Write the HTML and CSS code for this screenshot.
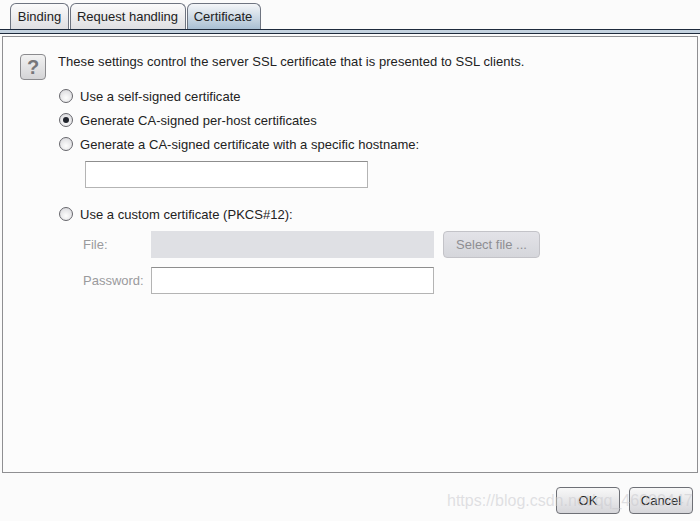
FILE: index.html
```html
<!DOCTYPE html>
<html lang="en">
<head>
    <meta charset="UTF-8">
    <title>Certificate</title>
    <link rel="stylesheet" href="styles.css">
</head>
<body>

    <div class="tabs">
        <div class="tab tab-binding">Binding</div>
        <div class="tab tab-request">Request handling</div>
        <div class="tab tab-active">Certificate</div>
    </div>
    <div class="tab-band"></div>

    <div class="panel">
        <div class="intro">
            <div class="help-icon">?</div>
            <p>These settings control the server SSL certificate that is presented to SSL clients.</p>
        </div>

        <div class="options">
            <label class="option"><span class="radio"></span>Use a self-signed certificate</label>
            <label class="option"><span class="radio radio-on"></span>Generate CA-signed per-host certificates</label>
            <label class="option"><span class="radio"></span>Generate a CA-signed certificate with a specific hostname:</label>
            <div class="text-field hostname"></div>
            <label class="option option-custom"><span class="radio"></span>Use a custom certificate (PKCS#12):</label>

            <div class="form-row row-file">
                <span class="form-label">File:</span>
                <div class="text-field field-wide field-disabled"></div>
                <div class="select-file">Select file ...</div>
            </div>
            <div class="form-row">
                <span class="form-label">Password:</span>
                <div class="text-field field-wide"></div>
            </div>
        </div>
    </div>

    <div class="footer">
        <div class="btn">OK</div>
        <div class="btn">Cancel</div>
    </div>

    <div class="watermark">https://blog.csdn.net/qq_46000447</div>

</body>
</html>
```

FILE: styles.css
```css
html, body {
    height: 100%;
}

body {
    font-family: 'Liberation Sans', Arial, sans-serif;
    font-size: 13px;
    color: #222;
    background: #fbfbfb;
    margin: 0;
    position: relative;
    overflow: hidden;
    display: flex;
    flex-direction: column;
}

.tabs {
    display: flex;
    gap: 1px;
    height: 26px;
    padding: 3px 0 0 10px;
}

.tab {
    display: flex;
    align-items: center;
    justify-content: center;
    box-sizing: border-box;
    height: 26px;
    border: 1px solid #6e7480;
    border-bottom: none;
    border-radius: 6px 6px 0 0;
    background: linear-gradient(to bottom, #fbfbfb, #dfdfe2);
}

.tab-binding {
    width: 59px;
}

.tab-request {
    width: 116px;
    padding-right: 1px;
}

.tab-active {
    width: 74px;
    padding-right: 2px;
    background: linear-gradient(to bottom, #f4f6f8, #a9bfd3);
}

.tab-band {
    height: 3px;
    background: #c4d2df;
    border-top: 1px solid #1e2a3c;
    border-bottom: 1px solid #1e2a3c;
}

.panel {
    box-sizing: border-box;
    height: 437px;
    margin: 2px 2px 0 2px;
    border: 1px solid #8f8f92;
    background: #fcfcfc;
}

.intro {
    display: flex;
    gap: 12px;
    padding: 17px 0 0 17px;
}

.intro p {
    margin: 0;
    line-height: 16px;
    letter-spacing: 0.06px;
}

.help-icon {
    box-sizing: border-box;
    width: 26px;
    height: 26px;
    border: 1px solid #8b8b8e;
    border-radius: 4px;
    background: linear-gradient(to bottom, #f2f2f2, #d4d4d6);
    color: #77777a;
    font-size: 20px;
    font-weight: bold;
    line-height: 24px;
    text-align: center;
}

.options {
    padding-left: 57px;
    margin-top: 4px;
}

.option {
    display: flex;
    align-items: center;
    gap: 6px;
    height: 24px;
    letter-spacing: 0.03px;
}

.option-custom {
    margin-top: 14px;
}

.radio {
    box-sizing: border-box;
    width: 14px;
    height: 14px;
    margin-left: -1px;
    margin-right: 1px;
    border: 1px solid #66666c;
    border-radius: 50%;
    background: radial-gradient(circle at 50% 65%, #fdfdfd, #d4d4d8);
    display: flex;
    align-items: center;
    justify-content: center;
}

.radio-on::after {
    content: "";
    width: 6px;
    height: 6px;
    border-radius: 50%;
    background: #20242c;
}

.text-field {
    box-sizing: border-box;
    height: 27px;
    background: #fff;
    border: 1px solid #b4b4b4;
    border-top-color: #8e8e8e;
}

.hostname {
    width: 283px;
    margin: 5px 0 0 25px;
}

.form-row {
    display: flex;
    align-items: center;
    margin-top: 9px;
}

.row-file {
    margin-top: 5px;
}

.form-label {
    width: 68px;
    padding-left: 23px;
    color: #9a9a9c;
}

.field-wide {
    width: 283px;
}

.field-disabled {
    background: #dfe0e4;
    border: none;
}

.select-file {
    box-sizing: border-box;
    width: 97px;
    height: 27px;
    margin-left: 9px;
    border: 1px solid #c3c3c8;
    border-radius: 4px;
    background: linear-gradient(to bottom, #e3e3e8, #d5d6db);
    color: #8e8e92;
    text-align: center;
    line-height: 25px;
}

.footer {
    display: flex;
    justify-content: flex-end;
    gap: 9px;
    padding: 14px 7px 0 0;
}

.btn {
    box-sizing: border-box;
    width: 64px;
    height: 27px;
    border: 1px solid #6e7076;
    border-radius: 4px;
    background: linear-gradient(to bottom, #f8f8f8, #d6d6da);
    text-align: center;
    line-height: 25px;
}

.watermark {
    position: absolute;
    left: 447px;
    top: 492px;
    font-size: 16px;
    color: rgba(200, 200, 205, 0.55);
    white-space: nowrap;
}
```
